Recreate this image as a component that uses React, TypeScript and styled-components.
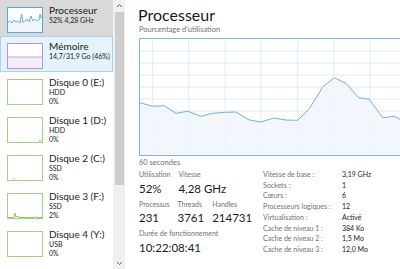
import React from "react";
import styled, { createGlobalStyle } from "styled-components";

const GlobalStyle = createGlobalStyle`
  html, body {
    margin: 0;
    padding: 0;
    background: #fff;
  }
  body {
    font-family: Lato, "Noto Sans", sans-serif;
    color: #1a1a1a;
    overflow: hidden;
  }
`;

const Window = styled.div`
  display: flex;
  width: 400px;
  height: 269px;
  overflow: hidden;
  background: #fff;
`;

/* ---------- sidebar ---------- */

const Sidebar = styled.div`
  display: flex;
  width: 125px;
  flex-shrink: 0;
`;

const List = styled.div`
  width: 113px;
  display: flex;
  flex-direction: column;
  overflow: hidden;
`;

const Item = styled.div<{ $h: number; $state?: "selected" | "hover" }>`
  display: flex;
  align-items: flex-start;
  gap: 6px;
  height: ${({ $h }) => $h}px;
  flex-shrink: 0;
  box-sizing: border-box;
  padding: 6px 0 0 6px;
  border: 1px solid
    ${({ $state }) => ($state === "hover" ? "#a6d3f2" : "transparent")};
  background: ${({ $state }) =>
    $state === "selected" ? "#d9d9d9" : $state === "hover" ? "#e5f3fb" : "transparent"};
`;

const Thumb = styled.div<{ $color: string }>`
  width: 36px;
  height: 26px;
  flex-shrink: 0;
  box-sizing: border-box;
  border: 1px solid ${({ $color }) => $color};
  background: #fff;

  svg {
    display: block;
  }
`;

const ItemText = styled.div`
  display: flex;
  flex-direction: column;
  margin-top: -3px;
  white-space: nowrap;
`;

const ItemTitle = styled.div`
  font-size: 10px;
  line-height: 12px;
  color: #1a1a1a;
`;

const ItemSub = styled.div`
  font-size: 7px;
  line-height: 8.5px;
  color: #1a1a1a;
`;

const Scrollbar = styled.div`
  width: 12px;
  display: flex;
  flex-direction: column;
  align-items: center;
  background: #f0f0f0;
`;

const ScrollArrow = styled.div`
  height: 11px;
  display: flex;
  align-items: center;
  justify-content: center;
  color: #606060;
`;

const ScrollThumb = styled.div`
  width: 9px;
  height: 173px;
  margin-top: 1px;
  background: #cdcdcd;
`;

const ScrollRest = styled.div`
  flex: 1;
`;

/* ---------- main ---------- */

const Main = styled.div`
  flex: 1;
  min-width: 0;
  padding-left: 14px;
  overflow: hidden;
`;

const Title = styled.div`
  margin-top: 5px;
  margin-left: -1px;
  font-size: 16px;
  line-height: 20px;
  color: #1a1a1a;
`;

const Caption = styled.div`
  font-size: 7.5px;
  line-height: 9px;
  color: #707070;
  white-space: nowrap;
`;

const ChartBox = styled.div`
  width: 290px;
  height: 118px;
  margin-top: 4px;
  box-sizing: border-box;
  border: 1px solid #79b6e1;
  background: #fff;

  svg {
    display: block;
  }
`;

const ChartFooter = styled(Caption)`
  margin-top: 2px;
`;

const Stats = styled.div`
  display: flex;
  margin-top: 3px;
`;

const LeftStats = styled.div`
  width: 124px;
  flex-shrink: 0;
  display: flex;
  flex-direction: column;
  gap: 4px;
`;

const StatRow = styled.div<{ $gap: number }>`
  display: flex;
  gap: ${({ $gap }) => $gap}px;
`;

const Stat = styled.div`
  display: flex;
  flex-direction: column;
  gap: 2.5px;
  white-space: nowrap;
`;

const StatLabel = styled.div`
  font-size: 7px;
  line-height: 9px;
  color: #707070;
`;

const StatValue = styled.div`
  font-size: 11.5px;
  line-height: 14px;
  color: #1a1a1a;
`;

const SpecTable = styled.div`
  display: grid;
  grid-template-columns: 79px auto;
  margin-top: -1px;
  font-size: 7px;
  line-height: 10.7px;
  white-space: nowrap;
`;

const SpecLabel = styled.div`
  color: #707070;
`;

const SpecValue = styled.div`
  color: #1a1a1a;
`;

/* ---------- drawings ---------- */

const Chevron = ({ up }: { up?: boolean }) => (
  <svg width="7" height="5" viewBox="0 0 7 5">
    <path
      d={up ? "M1 4 L3.5 1.5 L6 4" : "M1 1 L3.5 3.5 L6 1"}
      fill="none"
      stroke="currentColor"
      strokeWidth="1"
    />
  </svg>
);

const cpuThumb =
  "0,14 2,13 4,15 6,12 8,14 10,13 12,15 13.5,6 15,14 17,13 19,11 21,14 23,8 25,13 27,11 29,13 31,12 32,6 33,10 34,9";

const CpuThumb = () => (
  <svg width="34" height="24" viewBox="0 0 34 24">
    <polygon points={`0,24 ${cpuThumb} 34,24`} fill="#eef5fb" />
    <polyline points={cpuThumb} fill="none" stroke="#4a9fd6" strokeWidth="0.8" />
  </svg>
);

const MemThumb = () => (
  <svg width="34" height="24" viewBox="0 0 34 24">
    <rect x="0" y="13" width="34" height="11" fill="#f4eef6" />
    <line x1="0" y1="13" x2="34" y2="13" stroke="#b98bcc" strokeWidth="0.8" />
  </svg>
);

const DiskThumb = ({ points }: { points?: string }) => (
  <svg width="34" height="24" viewBox="0 0 34 24">
    {points && (
      <polyline points={points} fill="none" stroke="#79c258" strokeWidth="0.9" />
    )}
  </svg>
);

const chartPoints: [number, number][] = [
  [0, 63.7], [12.7, 67.3], [24.3, 66.7], [36, 74.3], [47.7, 72.3], [61, 77.3],
  [72.7, 74.3], [84.3, 73.3], [96, 73], [109.3, 81], [121, 83], [133.7, 79],
  [146, 81], [157.7, 81.3], [169.3, 69.7], [182.7, 48], [194.3, 38.7], [206, 44.3],
  [218.7, 58.7], [229.3, 60.3], [242.7, 78.7], [254.3, 77.3], [260, 80.3],
  [272, 78], [284, 80], [290, 79],
];

const CpuChart = () => {
  const line = chartPoints.map(([x, y]) => `${x},${y}`).join(" ");
  const vLines = [12.7, 48.7, 85, 121, 157.7, 194, 230, 266.3];
  const hLines = [12, 24, 36, 48, 60, 72, 83.7, 95.7, 107.3];
  return (
    <svg width="288" height="116" viewBox="0 0 288 116">
      {vLines.map((x) => (
        <line key={`v${x}`} x1={x} y1="0" x2={x} y2="116" stroke="#dcebf7" strokeWidth="1" />
      ))}
      {hLines.map((y) => (
        <line key={`h${y}`} x1="0" y1={y} x2="288" y2={y} stroke="#dcebf7" strokeWidth="1" />
      ))}
      <polygon points={`0,116 ${line} 290,116`} fill="#f1f6fb" fillOpacity="0.85" />
      <polyline points={line} fill="none" stroke="#70b1de" strokeWidth="1" />
    </svg>
  );
};

/* ---------- data ---------- */

const disks = [
  { name: "Disque 0 (E:)", kind: "HDD", use: "0%" },
  { name: "Disque 1 (D:)", kind: "HDD", use: "0%", points: "31,23.5 32,22 33,23.5" },
  { name: "Disque 2 (C:)", kind: "SSD", use: "0%", points: "5,23.5 6,22.5 7,23.5" },
  {
    name: "Disque 3 (F:)",
    kind: "SSD",
    use: "2%",
    points: "0,23.5 6,23.5 7,19 8,23 10,22 11,23.5 26,23.5 27,22.5 28,23.5 34,23.5",
  },
  { name: "Disque 4 (Y:)", kind: "USB", use: "0%" },
];

const specs = [
  ["Vitesse de base :", "3,19 GHz"],
  ["Sockets :", "1"],
  ["Cœurs :", "6"],
  ["Processeurs logiques :", "12"],
  ["Virtualisation :", "Activé"],
  ["Cache de niveau 1 :", "384 Ko"],
  ["Cache de niveau 2 :", "1,5 Mo"],
  ["Cache de niveau 3 :", "12,0 Mo"],
];

export default function App() {
  return (
    <>
      <GlobalStyle />
      <Window>
        <Sidebar>
          <List>
            <Item $h={36} $state="selected">
              <Thumb $color="#5aa7dc">
                <CpuThumb />
              </Thumb>
              <ItemText>
                <ItemTitle>Processeur</ItemTitle>
                <ItemSub>52% 4,28 GHz</ItemSub>
              </ItemText>
            </Item>
            <Item $h={36} $state="hover">
              <Thumb $color="#c18ed6">
                <MemThumb />
              </Thumb>
              <ItemText>
                <ItemTitle>Mémoire</ItemTitle>
                <ItemSub>14,7/31,9 Go (46%)</ItemSub>
              </ItemText>
            </Item>
            {disks.map((d) => (
              <Item key={d.name} $h={38}>
                <Thumb $color="#9fd47f">
                  <DiskThumb points={d.points} />
                </Thumb>
                <ItemText>
                  <ItemTitle>{d.name}</ItemTitle>
                  <ItemSub>{d.kind}</ItemSub>
                  <ItemSub>{d.use}</ItemSub>
                </ItemText>
              </Item>
            ))}
          </List>
          <Scrollbar>
            <ScrollArrow>
              <Chevron up />
            </ScrollArrow>
            <ScrollThumb />
            <ScrollRest />
            <ScrollArrow>
              <Chevron />
            </ScrollArrow>
          </Scrollbar>
        </Sidebar>

        <Main>
          <Title>Processeur</Title>
          <Caption>Pourcentage d'utilisation</Caption>
          <ChartBox>
            <CpuChart />
          </ChartBox>
          <ChartFooter>60 secondes</ChartFooter>
          <Stats>
            <LeftStats>
              <StatRow $gap={8}>
                <Stat>
                  <StatLabel>Utilisation</StatLabel>
                  <StatValue>52%</StatValue>
                </Stat>
                <Stat>
                  <StatLabel>Vitesse</StatLabel>
                  <StatValue>4,28 GHz</StatValue>
                </Stat>
              </StatRow>
              <StatRow $gap={8}>
                <Stat>
                  <StatLabel>Processus</StatLabel>
                  <StatValue>231</StatValue>
                </Stat>
                <Stat>
                  <StatLabel>Threads</StatLabel>
                  <StatValue>3761</StatValue>
                </Stat>
                <Stat>
                  <StatLabel>Handles</StatLabel>
                  <StatValue>214731</StatValue>
                </Stat>
              </StatRow>
              <StatRow $gap={8}>
                <Stat>
                  <StatLabel>Durée de fonctionnement</StatLabel>
                  <StatValue>10:22:08:41</StatValue>
                </Stat>
              </StatRow>
            </LeftStats>
            <SpecTable>
              {specs.map(([label, value]) => (
                <React.Fragment key={label}>
                  <SpecLabel>{label}</SpecLabel>
                  <SpecValue>{value}</SpecValue>
                </React.Fragment>
              ))}
            </SpecTable>
          </Stats>
        </Main>
      </Window>
    </>
  );
}
